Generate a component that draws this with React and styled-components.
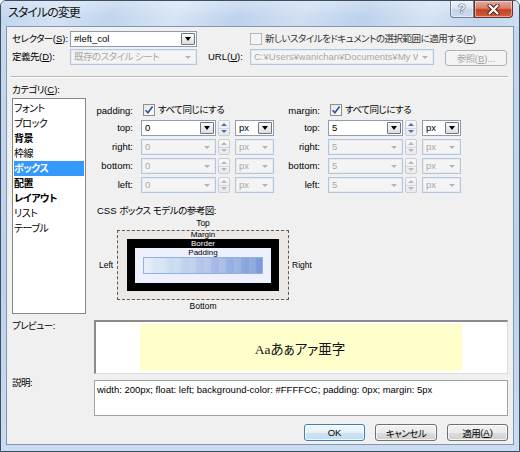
import React from 'react';
import styled, { createGlobalStyle, css } from 'styled-components';

const UI_FONT = `"Liberation Sans", "Noto Sans CJK JP", sans-serif`;

const GlobalStyle = createGlobalStyle`
  html, body { margin: 0; padding: 0; background: #ffffff; }
  body {
    font-family: ${UI_FONT};
    font-size: 9.5px;
    color: #000;
    font-feature-settings: "palt";
  }
  * { box-sizing: border-box; }
`;

const Jp = styled.span`
  letter-spacing: -0.5px;
`;

const Window = styled.div`
  width: 520px;
  height: 452px;
  border: 1px solid #3e4e62;
  border-radius: 6px 6px 0 0;
  background: linear-gradient(180deg, #c6d9ef 0%, #bcd1eb 60%, #cadcf1 100%);
  display: flex;
  flex-direction: column;
  overflow: hidden;
`;

const TitleBar = styled.div`
  height: 25px;
  flex: none;
  display: flex;
  align-items: flex-start;
  background:
    linear-gradient(180deg, rgba(255,255,255,0.28) 0%, rgba(255,255,255,0) 70%),
    linear-gradient(112deg, #bfd4ed 0%, #d3e2f4 12%, #c0d4ed 22%, #d6e5f5 34%, #bed2ec 46%,
      #cfdff2 58%, #bcd1eb 70%, #d4e3f4 82%, #c2d6ee 92%, #cddef2 100%);
`;

const Title = styled.div`
  padding-left: 7px;
  line-height: 25px;
  font-size: 12px;
  letter-spacing: -1px;
  color: #111;
`;

const Captions = styled.div`
  margin-left: auto;
  margin-right: 6px;
  display: flex;
`;

const CaptionBtn = styled.div`
  height: 17px;
  width: ${p => p.$w}px;
  display: flex;
  align-items: center;
  justify-content: center;
  border: 1px solid ${p => (p.$close ? '#6e2f26' : '#6f7f96')};
  border-top: none;
  border-radius: ${p => (p.$close ? '0 0 4px 0' : '0 0 0 4px')};
  background: ${p =>
    p.$close
      ? 'linear-gradient(180deg, #e8a898 0%, #d8806a 45%, #c23f24 55%, #d1603f 100%)'
      : 'linear-gradient(180deg, #eef3fa 0%, #d9e4f2 45%, #c3d3e8 55%, #cfdcee 100%)'};
  box-shadow: inset 0 0 0 1px rgba(255,255,255,0.45);
  font-family: "Liberation Sans", sans-serif;
  font-weight: bold;
  font-size: 12px;
  color: #f7f9fc;
  text-shadow: 0 0 1px #3f4e63, 0 0 1px #3f4e63, 0 0 1px #3f4e63;
`;

const Body = styled.div`
  flex: 1;
  margin: 0 5px 6px 5px;
  border: 1px solid #8496ae;
  background: #f0f0f0;
  padding: 4px 5px 0 5px;
  display: flex;
  flex-direction: column;
`;

const Row = styled.div`
  display: flex;
  align-items: ${p => p.$align || 'center'};
  margin-top: ${p => p.$mt || 0}px;
  flex: none;
`;

const FieldLabel = styled.div`
  width: ${p => p.$w}px;
  margin-left: ${p => p.$ml || 0}px;
  margin-top: ${p => p.$mt || 0}px;
  flex: none;
  line-height: 12px;
  white-space: nowrap;
`;

const ComboBox = styled.div`
  width: ${p => p.$w}px;
  height: 16px;
  flex: none;
  display: flex;
  align-items: stretch;
  border: 1px solid ${p => (p.$disabled ? '#b4c6db' : '#8d9cb0')};
  background: ${p => (p.$disabled ? '#f4f4f4' : '#ffffff')};
  color: ${p => (p.$disabled ? '#a8a8a8' : '#000')};
  box-shadow: ${p => (p.$disabled ? 'inset 0 0 0 1px #e4ebf3' : 'none')};
`;

const ComboText = styled.span`
  flex: 1;
  min-width: 0;
  padding-left: 3px;
  line-height: 14px;
  white-space: nowrap;
  overflow: hidden;
`;

const DropBtn = styled.span`
  width: 14px;
  flex: none;
  display: flex;
  align-items: center;
  justify-content: center;
  margin: 1px 1px 1px 0;
  ${p =>
    !p.$disabled &&
    css`
      border: 1px solid #6e7680;
      border-radius: 1px;
      background: linear-gradient(180deg, #fbfbfb 0%, #ececec 50%, #dedede 100%);
    `}
`;

const Tri = styled.span`
  width: 0;
  height: 0;
  border-left: ${p => (p.$up ? 3 : 3.5)}px solid transparent;
  border-right: ${p => (p.$up ? 3 : 3.5)}px solid transparent;
  ${p =>
    p.$up
      ? css`border-bottom: 3px solid ${p.$color};`
      : css`border-top: ${p.$small ? 3 : 4}px solid ${p.$color};`}
`;

const Combo = ({ w, value, disabled }) => (
  <ComboBox $w={w} $disabled={disabled}>
    <ComboText>{value}</ComboText>
    <DropBtn $disabled={disabled}>
      <Tri $color={disabled ? '#b3b3b3' : '#000'} $small={disabled} />
    </DropBtn>
  </ComboBox>
);

const SpinBox = styled.div`
  width: 12px;
  height: 16px;
  margin: 0 5px 0 2px;
  flex: none;
  display: flex;
  flex-direction: column;
  border: 1px solid #c6cfd9;
  border-radius: 2px;
  background: linear-gradient(180deg, #f8f8f8, #e9e9e9);
`;

const SpinHalf = styled.span`
  flex: 1;
  display: flex;
  align-items: center;
  justify-content: center;
  & + & { border-top: 1px solid #d2d8df; }
`;

const Spinner = ({ disabled }) => (
  <SpinBox>
    <SpinHalf><Tri $up $color={disabled ? '#b8b8b8' : '#4a6fb3'} /></SpinHalf>
    <SpinHalf><Tri $color={disabled ? '#b8b8b8' : '#4a6fb3'} $small /></SpinHalf>
  </SpinBox>
);

const CheckBoxBox = styled.span`
  width: 12px;
  height: 12px;
  flex: none;
  display: inline-flex;
  align-items: center;
  justify-content: center;
  border: 1px solid ${p => (p.$disabled ? '#b8b8b8' : '#8e8f8f')};
  background: ${p =>
    p.$disabled ? '#f4f4f4' : 'linear-gradient(135deg, #e6e6e6 0%, #ffffff 100%)'};
  margin-left: ${p => p.$ml || 0}px;
  margin-right: 3px;
`;

const CheckBox = ({ checked, disabled, ml }) => (
  <CheckBoxBox $disabled={disabled} $ml={ml}>
    {checked && (
      <svg width="10" height="10" viewBox="0 0 10 10">
        <path d="M1.5 5.2 L3.9 7.8 L8.6 1.6" fill="none" stroke="#2c4f9c" strokeWidth="1.6" />
      </svg>
    )}
  </CheckBoxBox>
);

const CheckLabel = styled.span`
  color: ${p => (p.$disabled ? '#333' : '#000')};
  white-space: nowrap;
  line-height: 12px;
`;

const Button = styled.div`
  height: ${p => p.$h || 17}px;
  width: ${p => p.$w}px;
  margin-left: ${p => p.$ml || 0}px;
  margin-top: ${p => p.$mt || 0}px;
  flex: none;
  display: flex;
  align-items: center;
  justify-content: center;
  border: 1px solid #707070;
  border-radius: 3px;
  background: linear-gradient(180deg, #f2f2f2 0%, #ebebeb 50%, #dddddd 51%, #cfcfcf 100%);
  box-shadow: inset 0 0 0 1px rgba(255, 255, 255, 0.75);
  color: #000;
  white-space: nowrap;
  ${p =>
    p.$default &&
    css`
      border-color: #3c7fb1;
      background: linear-gradient(180deg, #f3f9fd 0%, #e4f1fa 50%, #cfe4f3 51%, #c1dced 100%);
    `}
  ${p =>
    p.$disabled &&
    css`
      border-color: #adb2b5;
      background: #f4f4f4;
      color: #a4a4a4;
      box-shadow: none;
    `}
`;

const Separator = styled.div`
  height: 2px;
  margin: 10px 0 0 -2px;
  border-top: 1px solid #b9b9b9;
  border-bottom: 1px solid #ffffff;
  flex: none;
`;

const SectionTitle = styled.div`
  line-height: 12px;
  margin-top: ${p => p.$mt || 0}px;
  padding-left: ${p => p.$pl || 0}px;
  flex: none;
`;

const MainRow = styled.div`
  display: flex;
  margin-top: 2px;
  flex: none;
`;

const ListBox = styled.ul`
  list-style: none;
  margin: 0;
  padding: 2px 1px;
  width: 74px;
  height: 216px;
  flex: none;
  border: 1px solid #828790;
  background: #fff;
`;

const ListItem = styled.li`
  height: 15px;
  line-height: 15px;
  padding-left: 0;
  letter-spacing: -0.5px;
  font-size: 10px;
  font-weight: ${p => (p.$bold ? 'bold' : 'normal')};
  ${p =>
    p.$selected &&
    css`
      background: #3399ff;
      color: #fff;
    `}
`;

const RightPanel = styled.div`
  margin-left: 7px;
  flex: 1;
  padding-top: 6px;
  display: flex;
  flex-direction: column;
`;

const SectionsRow = styled.div`
  display: flex;
`;

const Section = styled.div`
  width: ${p => p.$w}px;
  flex: none;
  display: grid;
  grid-template-columns: 40px auto;
  column-gap: 8px;
  row-gap: 3px;
  align-items: center;
  justify-content: start;
`;

const SideLabel = styled.div`
  text-align: right;
  white-space: nowrap;
  line-height: 12px;
`;

const HeaderCell = styled.div`
  display: flex;
  align-items: center;
  height: 12px;
  margin-bottom: 1px;
`;

const FieldGroup = styled.div`
  display: flex;
  align-items: center;
`;

const Diagram = styled.div`
  display: grid;
  grid-template-columns: 20px 172px auto;
  grid-template-rows: 13px 70px 12px;
  margin-left: 4px;
  font-family: "Liberation Sans", sans-serif;
  font-size: 8.5px;
  color: #000;
`;

const DiagLabel = styled.div`
  display: flex;
  align-items: center;
  justify-content: ${p => p.$justify || 'center'};
  padding-left: ${p => p.$pl || 0}px;
  grid-column: ${p => p.$col};
  grid-row: ${p => p.$row};
  line-height: 9px;
`;

const MarginBox = styled.div`
  grid-column: 2;
  grid-row: 2;
  border: 1px dashed #5a5a5a;
  background: #ebe8e5;
  padding: 0 9px 8px 9px;
  display: flex;
  flex-direction: column;
`;

const BoxCaption = styled.div`
  height: ${p => p.$h}px;
  line-height: ${p => p.$h}px;
  font-size: 8px;
  text-align: center;
  color: ${p => p.$color || '#000'};
  flex: none;
`;

const BorderBox = styled.div`
  flex: 1;
  background: #000;
  padding: 0 8px 8px 8px;
  display: flex;
  flex-direction: column;
`;

const PaddingBox = styled.div`
  flex: 1;
  background: #eef0fd;
  padding: 0 8px 9px 8px;
  display: flex;
  flex-direction: column;
`;

const ContentBar = styled.div`
  flex: 1;
  border: 1px solid #91b1e2;
  background:
    repeating-linear-gradient(90deg, rgba(255,255,255,0.12) 0 7px, rgba(255,255,255,0) 7px 15px),
    linear-gradient(90deg, #e3edf8 0%, #c8dcef 25%, #adbfe8 55%, #90abdf 80%, #7a98d8 100%);
`;

const PreviewBox = styled.div`
  flex: 1;
  height: 54px;
  border-top: 2px solid #8a8a8a;
  border-left: 2px solid #8a8a8a;
  border-right: 1px solid #dcdcdc;
  border-bottom: 1px solid #dcdcdc;
  background: #fff;
  display: flex;
  padding: 2px 0 2px 44px;
`;

const PreviewSample = styled.div`
  width: 322px;
  background: #ffffcc;
  display: flex;
  align-items: center;
  justify-content: center;
  font-family: "Liberation Serif", "Noto Sans CJK JP", serif;
  font-size: 13.5px;
  color: #111;
  padding-right: 2px;
`;

const DescBox = styled.div`
  flex: 1;
  height: 36px;
  border: 1px solid #9ea3a9;
  background: #fff;
  padding: 3px 2px;
  line-height: 12px;
  white-space: nowrap;
  overflow: hidden;
`;

const ButtonRow = styled.div`
  display: flex;
  justify-content: flex-end;
  margin-top: 8px;
  gap: 10px;
`;

const Underline = styled.span`
  text-decoration: underline;
`;

const categories = [
  { label: 'フォント' },
  { label: 'ブロック' },
  { label: '背景', bold: true },
  { label: '枠線' },
  { label: 'ボックス', bold: true, selected: true },
  { label: '配置', bold: true },
  { label: 'レイアウト', bold: true },
  { label: 'リスト' },
  { label: 'テーブル' },
];

const sides = [
  { key: 'top', enabled: true },
  { key: 'right' },
  { key: 'bottom' },
  { key: 'left' },
];

const BoxSection = ({ name, value, width }) => (
  <Section $w={width}>
    <SideLabel>{name}:</SideLabel>
    <HeaderCell>
      <CheckBox checked ml={2} />
      <CheckLabel><Jp>すべて同じにする</Jp></CheckLabel>
    </HeaderCell>
    {sides.map(s => (
      <React.Fragment key={s.key}>
        <SideLabel>{s.key}:</SideLabel>
        <FieldGroup>
          <Combo w={75} value={value} disabled={!s.enabled} />
          <Spinner disabled={!s.enabled} />
          <Combo w={39} value="px" disabled={!s.enabled} />
        </FieldGroup>
      </React.Fragment>
    ))}
  </Section>
);

export default function App() {
  return (
    <>
      <GlobalStyle />
      <Window>
        <TitleBar>
          <Title>スタイルの変更</Title>
          <Captions>
            <CaptionBtn $w={24}>?</CaptionBtn>
            <CaptionBtn $w={39} $close>
              <svg width="13" height="11" viewBox="0 0 13 11">
                <path d="M2.5 1.5 L10.5 9.5 M10.5 1.5 L2.5 9.5" stroke="#4a2018" strokeWidth="4" strokeLinecap="round" />
                <path d="M2.5 1.5 L10.5 9.5 M10.5 1.5 L2.5 9.5" stroke="#ffffff" strokeWidth="2.2" strokeLinecap="round" />
              </svg>
            </CaptionBtn>
          </Captions>
        </TitleBar>
        <Body>
          <Row>
            <FieldLabel $w={58}>
              <Jp>セレクター</Jp>(<Underline>S</Underline>):
            </FieldLabel>
            <Combo w={127} value="#left_col" />
            <FieldLabel $w={230} $ml={53}>
              <Row>
                <CheckBox disabled />
                <CheckLabel $disabled>
                  <Jp>新しいスタイルをドキュメントの選択範囲に適用する</Jp>(<Underline>P</Underline>)
                </CheckLabel>
              </Row>
            </FieldLabel>
          </Row>
          <Row $mt={2} $align="flex-start">
            <FieldLabel $w={58} $mt={2}>
              <Jp>定義先</Jp>(<Underline>D</Underline>):
            </FieldLabel>
            <Combo w={127} value={<Jp>既存のスタイル シート</Jp>} disabled />
            <FieldLabel $w={42} $ml={11} $mt={2}>
              URL(<Underline>U</Underline>):
            </FieldLabel>
            <Combo w={184} value="C:¥Users¥wanichan¥Documents¥My Web" disabled />
            <Button $w={62} $h={16} $mt={1} $ml={11} $disabled>
              <Jp>参照</Jp>(<Underline>B</Underline>)...
            </Button>
          </Row>
          <Separator />
          <SectionTitle $mt={6}>
            <Jp>カテゴリ</Jp>(<Underline>C</Underline>):
          </SectionTitle>
          <MainRow>
            <ListBox>
              {categories.map(c => (
                <ListItem key={c.label} $bold={c.bold} $selected={c.selected}>
                  {c.label}
                </ListItem>
              ))}
            </ListBox>
            <RightPanel>
              <SectionsRow>
                <BoxSection name="padding" value="0" width={187} />
                <BoxSection name="margin" value="5" width={190} />
              </SectionsRow>
              <SectionTitle $mt={12} $pl={4}>
                CSS <Jp>ボックス モデルの参考図</Jp>:
              </SectionTitle>
              <Diagram>
                <DiagLabel $col={2} $row={1}>Top</DiagLabel>
                <DiagLabel $col={1} $row={2} $justify="flex-start" $pl={2}>Left</DiagLabel>
                <MarginBox>
                  <BoxCaption $h={8}>Margin</BoxCaption>
                  <BorderBox>
                    <BoxCaption $h={9} $color="#fff">Border</BoxCaption>
                    <PaddingBox>
                      <BoxCaption $h={9}>Padding</BoxCaption>
                      <ContentBar />
                    </PaddingBox>
                  </BorderBox>
                </MarginBox>
                <DiagLabel $col={3} $row={2} $justify="flex-start" $pl={3}>Right</DiagLabel>
                <DiagLabel $col={2} $row={3}>Bottom</DiagLabel>
              </Diagram>
            </RightPanel>
          </MainRow>
          <Row $mt={6} $align="flex-start">
            <FieldLabel $w={82}><Jp>プレビュー</Jp>:</FieldLabel>
            <PreviewBox>
              <PreviewSample>Aaあぁアァ亜字</PreviewSample>
            </PreviewBox>
          </Row>
          <Row $mt={6} $align="flex-start">
            <FieldLabel $w={82} $mt={-3}><Jp>説明</Jp>:</FieldLabel>
            <DescBox>
              width: 200px; float: left; background-color: #FFFFCC; padding: 0px; margin: 5px
            </DescBox>
          </Row>
          <ButtonRow>
            <Button $w={61} $default>OK</Button>
            <Button $w={62}><Jp>キャンセル</Jp></Button>
            <Button $w={61}>
              <Jp>適用</Jp>(<Underline>A</Underline>)
            </Button>
          </ButtonRow>
        </Body>
      </Window>
    </>
  );
}
